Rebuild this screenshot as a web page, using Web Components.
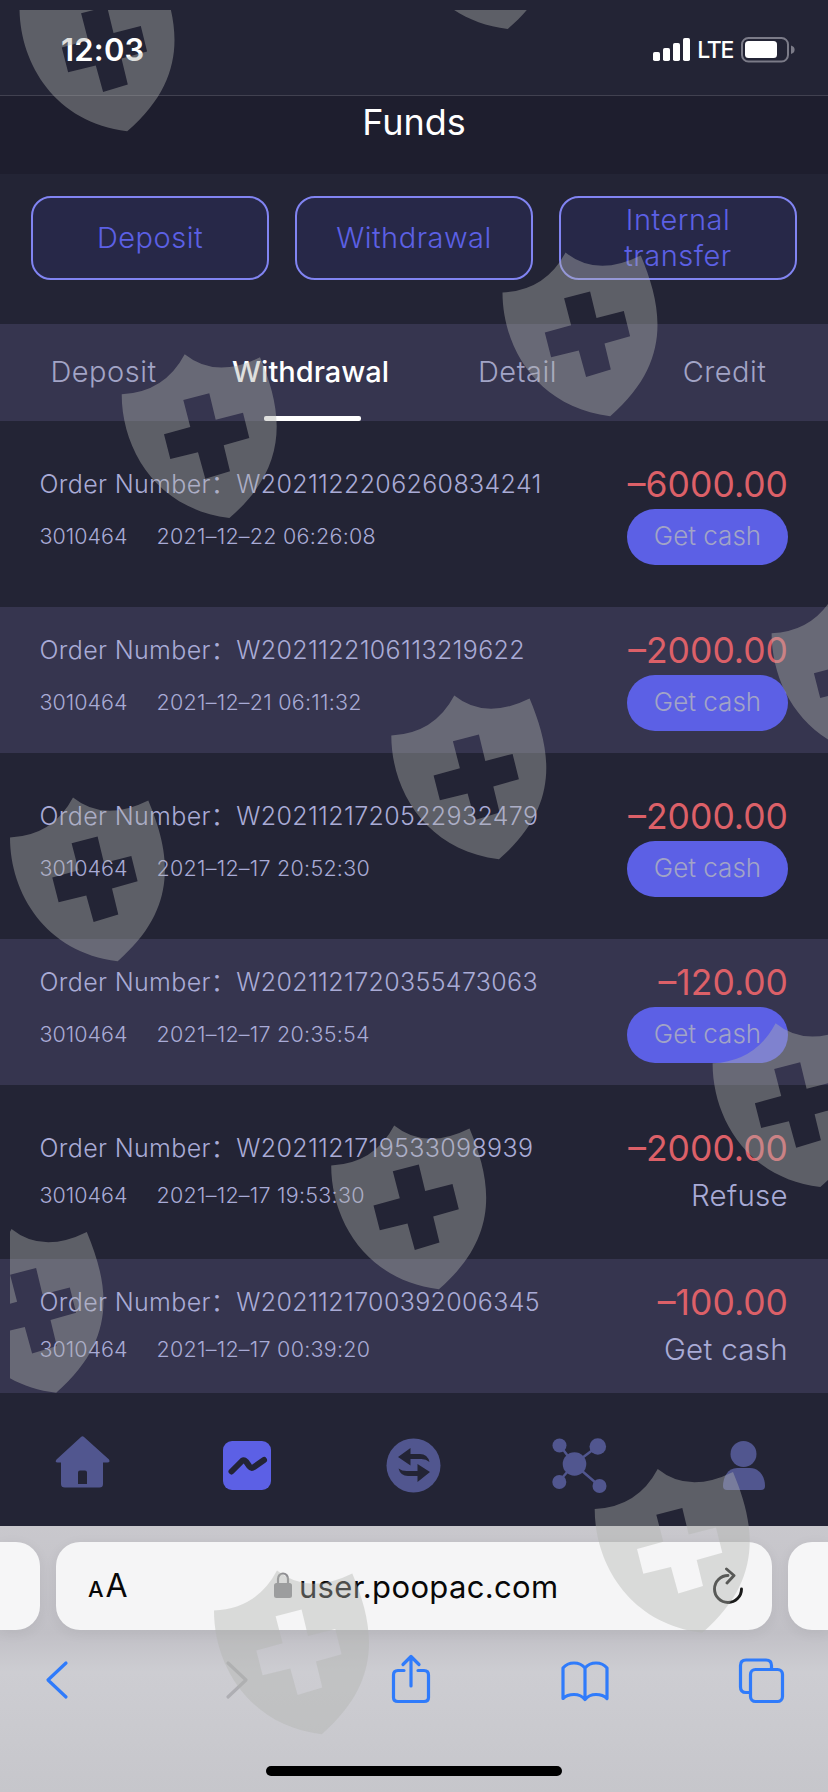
<!DOCTYPE html>
<html lang="en">
<head>
<meta charset="utf-8">
<title>Funds</title>
<style>
    html, body {
        margin: 0;
        padding: 0;
    }

    body {
        width: 828px;
        height: 1792px;
        overflow: hidden;
        background: #232435;
        font-family: Inter, "Noto Sans CJK SC", sans-serif;
        --color-text: #a9abd6;
        --color-muted: #a2a4c6;
        --color-accent: #5c60e5;
        --color-row: #36354f;
        --color-red: #dc6068;
        --color-icon: #51568f;
        --color-blue: #2f7bfb;
    }
</style>
</head>
<body>
<funds-app></funds-app>

<script>
(function () {

    function define(name, html, setup) {
        const template = document.createElement('template');
        template.innerHTML = html;

        window.customElements.define(name, class extends HTMLElement {
            constructor() {
                super();
                this.attachShadow({ mode: 'open' });
                this.shadowRoot.appendChild(template.content.cloneNode(true));
            }

            connectedCallback() {
                if (setup) { setup(this, this.shadowRoot); }
            }
        });
    }

    define('status-bar', `
        <style>
            :host {
                display: flex;
                align-items: flex-start;
                justify-content: space-between;
                height: 95px;
                padding: 0 33px 0 61px;
                box-sizing: content-box;
                border-bottom: 1px solid #414150;
                color: #fff;
            }
            .time {
                margin-top: 30px;
                font-size: 31px;
                line-height: 40px;
                font-weight: 600;
                letter-spacing: 0.2px;
            }
            .right {
                display: flex;
                align-items: center;
                margin-top: 36px;
                height: 28px;
            }
            .lte {
                margin: 0 8px 0 6px;
                font-size: 23px;
                line-height: 28px;
                font-weight: 500;
                letter-spacing: -1.3px;
            }
            svg { display: block; }
        </style>
        <div class="time">12:03</div>
        <div class="right">
            <svg width="38" height="28" fill="#fff">
                <rect x="0" y="16" width="7" height="9" rx="1.8"/>
                <rect x="10" y="12" width="7" height="13" rx="1.8"/>
                <rect x="20" y="7" width="7" height="18" rx="1.8"/>
                <rect x="30" y="2" width="7" height="23" rx="1.8"/>
            </svg>
            <span class="lte">LTE</span>
            <svg width="54" height="28">
                <rect x="1" y="2" width="46" height="23.5" rx="6.5" fill="none" stroke="#7b7b88" stroke-width="2"/>
                <rect x="4" y="5" width="32" height="17" rx="3.5" fill="#fff"/>
                <path d="M50 9.5q3.6 1 3.6 4.2T50 18z" fill="#7b7b88"/>
            </svg>
        </div>
    `);

    define('page-header', `
        <style>
            :host {
                display: block;
                height: 78px;
                background: #1e1e2e;
                color: #fff;
                text-align: center;
                font-size: 36px;
                line-height: 53px;
            }
        </style>
        <slot></slot>
    `);

    define('action-button', `
        <style>
            :host {
                display: flex;
                align-items: center;
                justify-content: center;
                width: 238px;
                height: 84px;
                box-sizing: border-box;
                border: 2px solid #8184f2;
                border-radius: 20px;
                background: #272848;
                color: var(--color-accent);
                font-size: 29px;
                font-weight: 340;
                line-height: 36px;
                letter-spacing: 0.5px;
                text-align: center;
            }
            span { max-width: 130px; }
            :host([wide]) span { max-width: none; }
        </style>
        <span><slot></slot></span>
    `);

    define('tab-item', `
        <style>
            :host {
                display: flex;
                flex: 1;
                flex-direction: column;
                align-items: center;
                justify-content: space-between;
                color: var(--color-muted);
                font-size: 29px;
                font-weight: 340;
                letter-spacing: 0.5px;
            }
            .label { line-height: 96px; height: 92px; }
            .bar { width: 97px; height: 5px; margin-left: 4px; border-radius: 2px; }
            :host([active]) { color: #fff; font-weight: 500; letter-spacing: 0; }
            :host([active]) .bar { background: #fff; }
        </style>
        <div class="label"><slot></slot></div>
        <div class="bar"></div>
    `);

    define('order-row', `
        <style>
            :host {
                display: flex;
                justify-content: space-between;
                box-sizing: border-box;
                padding: 45px 40px 0 39.5px;
                color: var(--color-text);
                font-weight: 340;
            }
            :host([shaded]) { background: var(--color-row); padding-top: 25px; }
            .number {
                font-size: 25px;
                line-height: 36px;
                letter-spacing: 0.35px;
                white-space: nowrap;
            }
            .meta {
                display: flex;
                gap: 29px;
                margin-top: 16px;
                font-size: 21.5px;
                line-height: 36px;
                white-space: nowrap;
            }
            .date { letter-spacing: 0.25px; }
            .right {
                display: flex;
                flex-direction: column;
                align-items: flex-end;
                margin-top: -3px;
            }
            .amount {
                font-size: 35.5px;
                line-height: 44px;
                font-weight: 420;
                color: var(--color-red);
            }
            .state {
                width: 161px;
                height: 56px;
                margin-top: 2px;
                border-radius: 28px;
                background: var(--color-accent);
                color: var(--color-muted);
                text-align: center;
                font-size: 26px;
                line-height: 54px;
            }
            :host([plain]) .meta { margin-top: 11px; }
            :host([plain]) .state {
                width: auto;
                height: 36px;
                margin-top: 6px;
                background: none;
                color: var(--color-text);
                font-size: 29.5px;
                letter-spacing: 0.3px;
                line-height: 36px;
            }
        </style>
        <div class="left">
            <div class="number"></div>
            <div class="meta"><span class="account"></span><span class="date"></span></div>
        </div>
        <div class="right">
            <div class="amount"></div>
            <div class="state"><slot></slot></div>
        </div>
    `, (host, root) => {
        root.querySelector('.number').textContent = 'Order Number：' + host.getAttribute('number');
        root.querySelector('.account').textContent = host.getAttribute('account');
        root.querySelector('.date').textContent = host.getAttribute('date').replace(/-/g, '–');
        root.querySelector('.amount').textContent = '–' + host.getAttribute('amount');
        host.style.height = host.getAttribute('height') + 'px';
    });

    define('bottom-nav', `
        <style>
            :host {
                display: flex;
                height: 133px;
                background: #232435;
            }
            div {
                flex: 1;
                display: flex;
                justify-content: center;
                padding-top: 41px;
            }
            svg { display: block; width: 60px; height: 62px; fill: var(--color-icon); }
        </style>
        <div><svg viewBox="0 0 60 62">
            <path fill-rule="evenodd" d="M28 3q1.500-1.300 3 0L56 25.500q1.500 3-1.500 3H50V50q0 3.500-3.500 3.500H12Q8 53.500 8 50V28.500H4.500q-3 0-1-3zM27 36.500q-2 0-2 2V50h9V38.500q0-2-2-2z"/>
        </svg></div>
        <div><svg viewBox="0 0 60 62">
            <rect x="5" y="7" width="48" height="49" rx="9" style="fill: var(--color-accent)"/>
            <path d="M13.500 37.500 24 27q2-1.500 4 .5l3.500 5q2 2.500 4.500.5L46 26" fill="none" stroke="#232435" stroke-width="6" stroke-linecap="round" stroke-linejoin="round"/>
        </svg></div>
        <div><svg viewBox="0 0 60 62">
            <circle cx="29.500" cy="31.500" r="27"/>
            <path fill="#232435" d="M14 23 26.500 14v6H36q7.500 0 9.500 8-3.500-3-8-3H26.500v6.500zM46 38 33.500 48v-6H24q-7.500 0-9.500-7.500 3.500 2.500 8 2.500h11v-7z"/>
        </svg></div>
        <div><svg viewBox="0 0 60 62">
            <path d="M9.500 11 24 30 48 12M9.500 47 24 30 49.500 52" fill="none" stroke="#51568f" stroke-width="2.400"/>
            <circle cx="9.500" cy="11.500" r="7"/>
            <circle cx="47.800" cy="12.500" r="8.300"/>
            <circle cx="24.500" cy="30" r="11.800"/>
            <circle cx="9.300" cy="48" r="7"/>
            <circle cx="49.500" cy="52" r="7"/>
        </svg></div>
        <div><svg viewBox="0 0 60 62">
            <circle cx="28.500" cy="20" r="13"/>
            <path d="M22 34h13c9 0 15 8 15 18q0 4-4 4H12q-4 0-4-4c0-9 5-18 14-18z"/>
        </svg></div>
    `);

    define('address-bar', `
        <style>
            :host {
                display: flex;
                gap: 16px;
                height: 88px;
                padding-top: 16px;
            }
            .edge { width: 40px; background: #f6f6f7; }
            .left { border-radius: 0 24px 24px 0; }
            .right { border-radius: 24px 0 0 24px; }
            .bar {
                flex: 1;
                display: flex;
                align-items: center;
                justify-content: space-between;
                box-sizing: border-box;
                padding: 0 28.5px 0 32px;
                border-radius: 24px;
                background: #f5f5f6;
                color: #080808;
            }
            .bar, .edge { box-shadow: 0 3px 14px rgba(0, 0, 0, 0.06); }
            .aa {
                width: 33px;
                font-size: 32px;
                line-height: 40px;
                white-space: nowrap;
            }
            .aa small { font-size: 22px; margin-right: 2px; font-weight: 500; }
            .url {
                display: flex;
                align-items: center;
                gap: 7px;
                font-size: 31px;
                line-height: 44px;
                letter-spacing: 0.35px;
            }
            .aa, .url { padding-top: 2px; }
            svg { display: block; }
        </style>
        <div class="edge left"></div>
        <div class="bar">
            <div class="aa"><small>A</small>A</div>
            <div class="url">
                <svg width="18" height="30" viewBox="0 0 18 30">
                    <rect x="0" y="11" width="18" height="15" rx="2.500" fill="#8e8e92"/>
                    <path d="M4 12V7a5 5.500 0 0 1 10 0v5" fill="none" stroke="#8e8e92" stroke-width="2.200"/>
                </svg>
                <span>user.poopac.com</span>
            </div>
            <svg width="32" height="38" viewBox="0 0 32 38">
                <path d="M16 8.500A13.500 13.500 0 1 0 29.500 22M14.500 2l7.500 6.500-7 7.500" fill="none" stroke="#1a1a1a" stroke-width="2.900" stroke-linecap="round" stroke-linejoin="round"/>
            </svg>
        </div>
        <div class="edge right"></div>
    `);

    define('browser-tools', `
        <style>
            :host {
                display: flex;
                justify-content: space-between;
                padding: 21px 38px 0 27px;
            }
            svg {
                display: block;
                width: 60px;
                height: 56px;
                fill: none;
                stroke: var(--color-blue);
                stroke-width: 3.2;
                stroke-linecap: round;
                stroke-linejoin: round;
            }
        </style>
        <svg viewBox="0 0 60 56"><path d="M39 12 21 29 39 46"/></svg>
        <svg viewBox="0 0 60 56"><path stroke="#aeaeb3" d="M25 12 43 29 25 46"/></svg>
        <svg viewBox="0 0 60 56">
            <path d="M25 19.500h-6q-4.500 0-4.500 4.500v22.500q0 4 4.500 4h26q4.500 0 4.500-4V24q0-4.500-4.500-4.500h-6M32 35V6M24 13.500l8-8 8 8"/>
        </svg>
        <svg viewBox="0 0 60 56">
            <path d="M31 17Q27 12 20 12T9 17V47.500Q13 43.500 20 43.500T31 48.500Q35 43.500 42 43.500T53 47.500V17Q49 12 42 12T31 17V48"/>
        </svg>
        <svg viewBox="0 0 60 56">
            <path d="M19 41.500h-3q-5.500 0-5.500-5.500V14.500Q10.500 9 16 9H36q5.500 0 5.500 5.500V18"/>
            <rect x="20.500" y="18.500" width="32" height="32" rx="5"/>
        </svg>
    `);

    define('browser-chrome', `
        <style>
            :host {
                display: flex;
                flex-direction: column;
                height: 266px;
                background: linear-gradient(#c9c8cd, #c1c0c6 40%, #cdcdd2 55%, #c6c6cb);
            }
            .home {
                width: 296px;
                height: 10px;
                margin: 59px auto 0;
                border-radius: 5px;
                background: #000;
            }
        </style>
        <address-bar></address-bar>
        <browser-tools></browser-tools>
        <div class="home"></div>
    `);

    // Free-floating shield emblems laid over the whole screen
    define('shield-overlay', `
        <style>
            :host {
                position: absolute;
                left: 10px;
                top: 10px;
                width: 818px;
                height: 1782px;
                overflow: hidden;
                pointer-events: none;
            }
            svg { display: block; }
        </style>
        <svg width="818" height="1782" viewBox="10 10 818 1782" fill="rgb(178,179,175)" fill-opacity="0.41"></svg>
    `, (host, root) => {
        const shape = 'M63 0Q43 38 0 40C0 95 35 155 107.700 163.700C170 110 160 55 138.300 3Q94 25 63 0Z' +
            'M61.600 45.700 68.600 72.700 42.300 80 48.600 104.700 76.300 98 83.600 124.400 108.300 117 102 91 127.600 83.800 121.300 58.400 94 65.500 87.600 39Z';
        const spots = [
            [19.5, -32.4], [400, -134.7], [502.5, 252.5], [121.7, 354.3],
            [391.3, 695.5], [771.6, 593.3], [10, 797.5], [712.6, 1023.3],
            [331.2, 1125.5], [-51.5, 1229], [594.7, 1469], [214, 1570.5]
        ];
        const svg = root.querySelector('svg');
        spots.forEach(([x, y]) => {
            const path = document.createElementNS('http://www.w3.org/2000/svg', 'path');
            path.setAttribute('d', shape);
            path.setAttribute('fill-rule', 'evenodd');
            path.setAttribute('transform', `translate(${x} ${y})`);
            svg.appendChild(path);
        });
    });

    define('funds-app', `
        <style>
            :host {
                display: flex;
                flex-direction: column;
                position: relative;
                width: 828px;
                height: 1792px;
                overflow: hidden;
            }
            .actions {
                display: flex;
                justify-content: space-between;
                padding: 22px 31px 44px;
            }
            .tabs {
                display: flex;
                height: 97px;
                background: var(--color-row);
            }
        </style>
        <status-bar></status-bar>
        <page-header>Funds</page-header>
        <div class="actions">
            <action-button>Deposit</action-button>
            <action-button wide>Withdrawal</action-button>
            <action-button>Internal transfer</action-button>
        </div>
        <div class="tabs">
            <tab-item>Deposit</tab-item>
            <tab-item active>Withdrawal</tab-item>
            <tab-item>Detail</tab-item>
            <tab-item>Credit</tab-item>
        </div>
        <order-row height="186" number="W2021122206260834241" account="3010464" date="2021-12-22 06:26:08" amount="6000.00">Get cash</order-row>
        <order-row shaded height="146" number="W2021122106113219622" account="3010464" date="2021-12-21 06:11:32" amount="2000.00">Get cash</order-row>
        <order-row height="186" number="W2021121720522932479" account="3010464" date="2021-12-17 20:52:30" amount="2000.00">Get cash</order-row>
        <order-row shaded height="146" number="W2021121720355473063" account="3010464" date="2021-12-17 20:35:54" amount="120.00">Get cash</order-row>
        <order-row plain height="174" number="W2021121719533098939" account="3010464" date="2021-12-17 19:53:30" amount="2000.00">Refuse</order-row>
        <order-row shaded plain height="134" number="W2021121700392006345" account="3010464" date="2021-12-17 00:39:20" amount="100.00">Get cash</order-row>
        <bottom-nav></bottom-nav>
        <browser-chrome></browser-chrome>
        <shield-overlay></shield-overlay>
    `);

})();
</script>
</body>
</html>
